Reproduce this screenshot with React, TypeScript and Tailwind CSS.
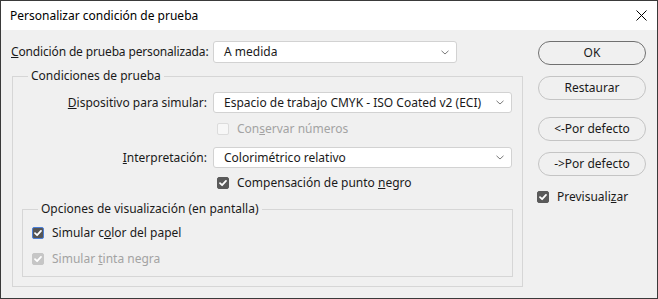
import React from 'react';

const font = { fontFamily: '"Segoe UI", "Noto Sans", "Open Sans", sans-serif' };

const Check = ({ checked, disabled, focused }: { checked?: boolean; disabled?: boolean; focused?: boolean }) => {
  let cls = 'bg-[#f7f7f7] border border-[#dcdcdc]';
  if (checked && !disabled) cls = 'bg-[#5a5a5a] border border-[#5a5a5a]';
  if (checked && disabled) cls = 'bg-[#c6c6c6] border border-[#c6c6c6]';
  if (focused) cls = 'bg-[#555555] border border-[#4a7fd8]';
  return (
    <span className={`inline-flex w-[12px] h-[12px] rounded-[2px] items-center justify-center shrink-0 ${cls}`}>
      {checked && (
        <svg width="10" height="10" viewBox="0 0 10 10">
          <path d="M2 5.2 L4.1 7.2 L8 2.9" fill="none" stroke="#ffffff" strokeWidth="1.8" strokeLinecap="round" strokeLinejoin="round" />
        </svg>
      )}
    </span>
  );
};

const Select = ({ value, width }: { value: string; width: string }) => (
  <div className={`${width} h-full bg-white border border-[#d2d2d2] rounded-[3px] flex items-center justify-between pl-[10px] pr-[7px]`}>
    <span className="text-[#1a1a1a] whitespace-nowrap">{value}</span>
    <svg width="8" height="5" viewBox="0 0 8 5">
      <path d="M0.5 0.8 L4 4 L7.5 0.8" fill="none" stroke="#7a7a7a" strokeWidth="1" />
    </svg>
  </div>
);

const Btn = ({ children, primary }: { children: React.ReactNode; primary?: boolean }) => (
  <div className={`w-[108px] h-[24px] rounded-full flex items-center justify-center text-[#1a1a1a] bg-[#f0f0f0] border ${primary ? 'border-[#707070]' : 'border-[#c4c4c4]'}`}>
    {children}
  </div>
);

const CheckRow = ({ children, checked, disabled, focused, className = '' }: { children: React.ReactNode; checked?: boolean; disabled?: boolean; focused?: boolean; className?: string }) => (
  <div className={`flex items-center gap-[8px] h-[12px] ${className}`}>
    <Check checked={checked} disabled={disabled} focused={focused} />
    <span className={`whitespace-nowrap ${disabled ? 'text-[#a3a3a3]' : 'text-[#1a1a1a]'}`}>{children}</span>
  </div>
);

export default function App() {
  return (
    <div style={font} className="w-[658px] h-[299px] flex flex-col border border-[#3a3a3a] bg-[#f0f0f0] text-[12px] leading-[16px]">
      <div className="h-[29px] bg-white flex items-center justify-between pl-[9px] pr-[9px] shrink-0">
        <span className="text-black">Personalizar condición de prueba</span>
        <svg width="11" height="11" viewBox="0 0 11 11" className="mr-[1px]">
          <path d="M0.5 0.5 L10.5 10.5 M10.5 0.5 L0.5 10.5" stroke="#000" strokeWidth="1" />
        </svg>
      </div>

      <div className="flex-1 flex pl-[10px] pr-[11px] pt-[11px]">
        <div className="w-[512px] flex flex-col">
          <div className="flex items-center h-[22px]">
            <span className="w-[202px] whitespace-nowrap text-[#1a1a1a] tracking-[-0.15px]"><u>C</u>ondición de prueba personalizada:</span>
            <Select value="A medida" width="w-[244px]" />
          </div>

          <fieldset className="ml-[1px] mt-[5px] w-[511px] border border-[#d6d6d6] pb-[9px]">
            <legend className="ml-[15px] px-[3px] text-[#1a1a1a]">Condiciones de prueba</legend>

            <div className="grid grid-cols-[194px_299px] gap-x-[6px]">
              <div className="mt-[8px] h-[21px] flex items-center justify-end whitespace-nowrap text-[#1a1a1a]"><span><u>D</u>ispositivo para simular:</span></div>
              <div className="mt-[8px] h-[21px]"><Select value="Espacio de trabajo CMYK - ISO Coated v2 (ECI)" width="w-[299px]" /></div>

              <div />
              <CheckRow disabled className="mt-[10px] ml-[4px]">Con<u>s</u>ervar números</CheckRow>

              <div className="mt-[12px] h-[21px] flex items-center justify-end whitespace-nowrap text-[#1a1a1a]"><span><u>I</u>nterpretación:</span></div>
              <div className="mt-[12px] h-[21px]"><Select value="Colorimétrico relativo" width="w-[299px]" /></div>

              <div />
              <CheckRow checked className="mt-[9px] ml-[4px]">Compensación de punto <u>n</u>egro</CheckRow>
            </div>

            <fieldset className="mx-[9px] mt-[12px] border border-[#d6d6d6] pb-[11px]">
              <legend className="ml-[15px] px-[3px] text-[#1a1a1a]">Opciones de visualización (en pantalla)</legend>
              <CheckRow checked focused className="mt-[10px] ml-[9px]">Simular c<u>o</u>lor del papel</CheckRow>
              <CheckRow checked disabled className="mt-[14px] ml-[9px]">Simular <u>t</u>inta negra</CheckRow>
            </fieldset>
          </fieldset>
        </div>

        <div className="ml-[15px] flex flex-col">
          <Btn primary>OK</Btn>
          <div className="mt-[11px]"><Btn>Restaurar</Btn></div>
          <div className="mt-[17px]"><Btn>&lt;-Por defecto</Btn></div>
          <div className="mt-[11px]"><Btn>-&gt;Por defecto</Btn></div>
          <CheckRow checked className="mt-[15px] -ml-[1px]">Previsuali<u>z</u>ar</CheckRow>
        </div>
      </div>
    </div>
  );
}
